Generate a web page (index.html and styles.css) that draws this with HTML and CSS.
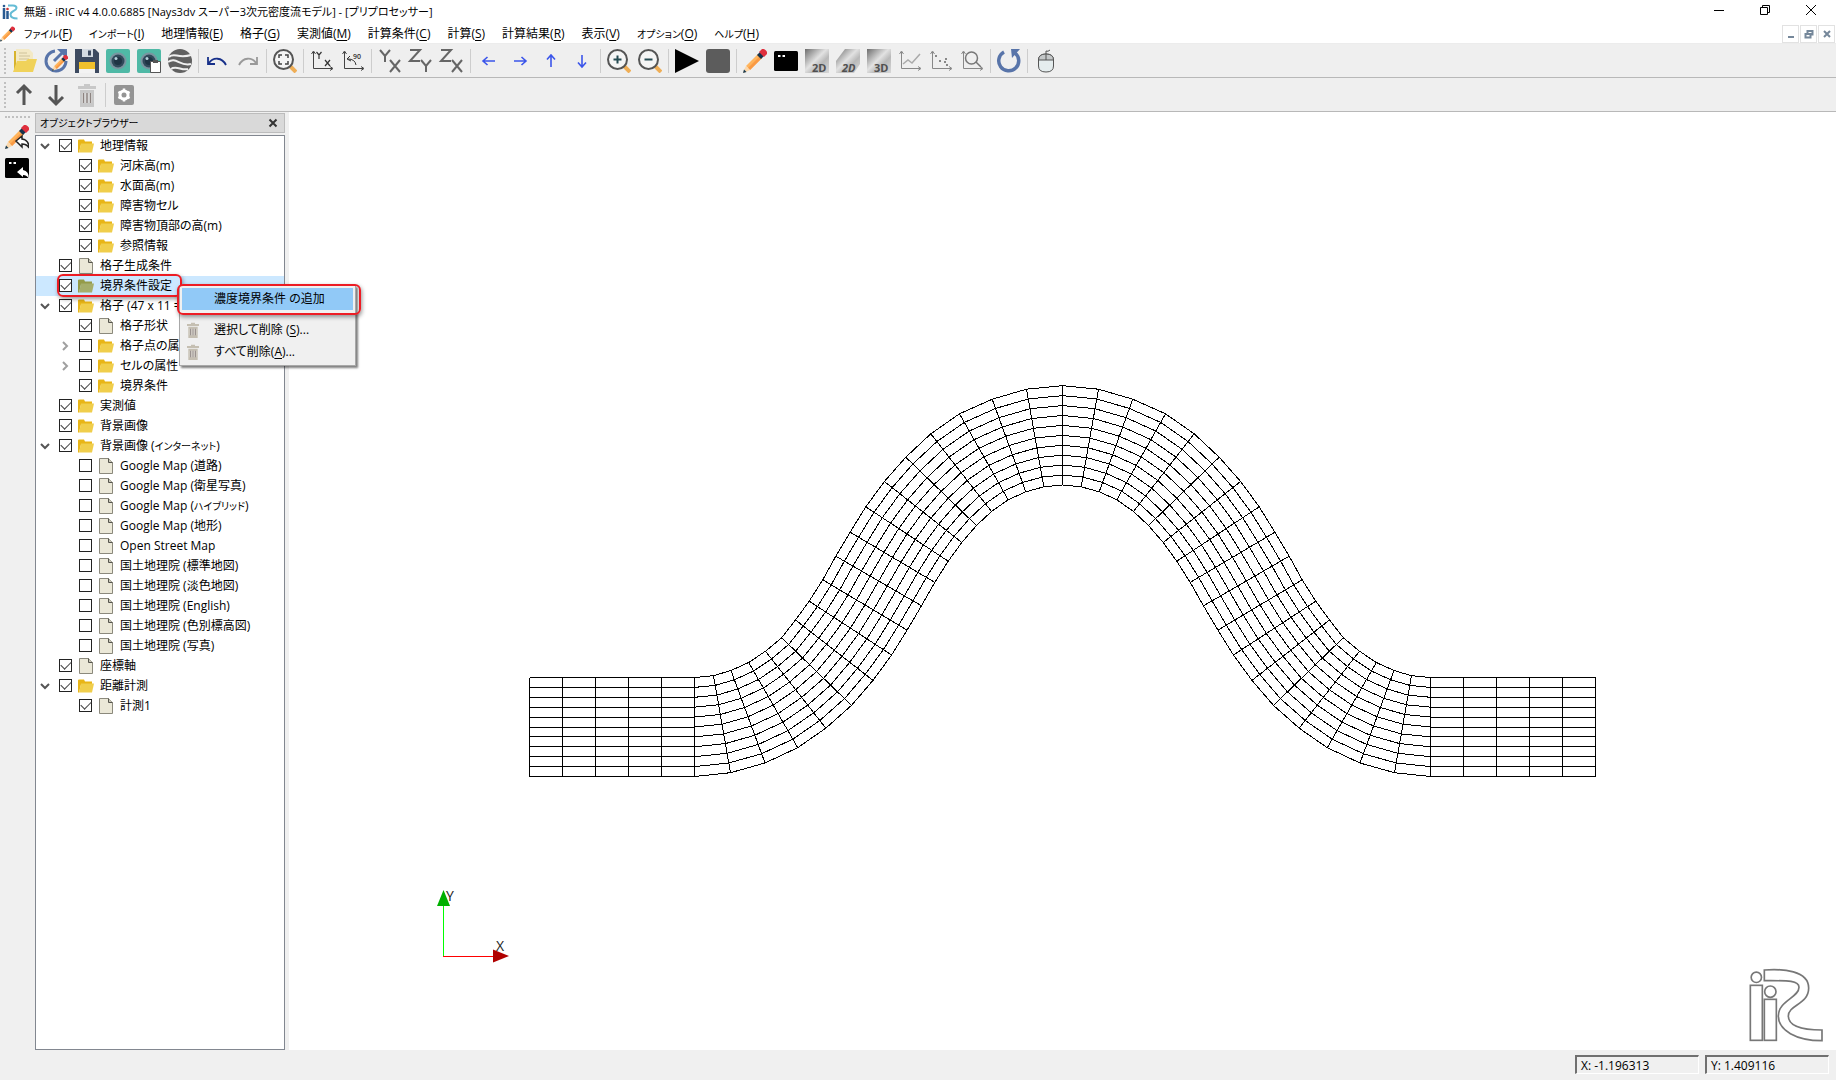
FILE: index.html
```html
<!DOCTYPE html>
<html lang="ja">
<head>
<meta charset="utf-8">
<title>無題 - iRIC v4</title>
<link rel="stylesheet" href="styles.css">
</head>
<body>
<svg class="sprite" aria-hidden="true">
  <defs>
    <linearGradient id="silver" x1="0" y1="0" x2="1" y2="1"><stop offset="0" stop-color="#6c6c6c"/><stop offset=".45" stop-color="#e2e2e2"/><stop offset=".65" stop-color="#b9b9b9"/><stop offset="1" stop-color="#d8d8d8"/></linearGradient>
    <symbol id="folder" viewBox="0 0 16 13"><path d="M0 1q0-1 1-1h5l1 2h7v3H3L1 13H0z" fill="#e8b517"/><path d="M3 4h13l-2 9H1z" fill="#f0ce4c"/></symbol>
    <symbol id="page" viewBox="0 0 14 16"><path d="M.5.5h9l4 4v11H.5z" fill="#ebe8d8" stroke="#8b897c"/><path d="M9.500.5v4h4" fill="#c9c7b8" stroke="#56554e"/></symbol>
    <symbol id="down" viewBox="0 0 10 6"><path d="M1 1l4 4 4-4" fill="none" stroke="#555" stroke-width="2"/></symbol>
    <symbol id="right" viewBox="0 0 6 10"><path d="M1 1l4 4-4 4" fill="none" stroke="#a0a0a0" stroke-width="2"/></symbol>
    <symbol id="trash" viewBox="0 0 24 24"><path d="M3 3h6V1h6v2h6v3H3zM5 7h14v17H5z" fill="currentColor"/><path d="M8.500 10v10M12 10v10M15.500 10v10" stroke="#fff" stroke-opacity=".55" stroke-width="3"/><path d="M8.500 10v10M12 10v10M15.500 10v10" stroke="#8c8380" stroke-width="1.500"/></symbol>
    <symbol id="pencil" viewBox="0 0 24 24"><path d="M3 17L15 5l4 4L7 21z" fill="#ffb45c"/><path d="M5 19L17 7l2 2L7 21z" fill="#f99a45"/><path d="M3 17l4 4-6 3-1-1z" fill="#fbd8ac"/><path d="M1 20.500L0 24l3.500-1z" fill="#173a52"/><path d="M14 6l3-3 4 4-3 3z" fill="#16334c"/><path d="M16 3l3-3q2-.5 4 1.500t1 3.500l-3 3z" fill="#df2f3d"/></symbol>
    <symbol id="console" viewBox="0 0 24 24"><rect y="2" width="24" height="20" rx="1.500" fill="#000"/><path d="M4 7h2.500M8.500 7H11" stroke="#fff" stroke-width="2"/></symbol>
    <symbol id="camera" viewBox="0 0 24 24"><rect width="24" height="24" rx="2" fill="#4fb9a6"/><circle cx="12" cy="12" r="8.500" fill="#7995a0"/><circle cx="12" cy="12" r="6.500" fill="#31495a"/><circle cx="12" cy="12" r="4" fill="#1f3444"/><circle cx="10" cy="9.500" r="1.500" fill="#b7d2dc"/></symbol>
    <symbol id="lens" viewBox="0 0 24 24"><path d="M17 17l6 6" stroke="#efae56" stroke-width="4"/><circle cx="10.500" cy="10.500" r="9.500" fill="#f5f5f5" stroke="#555" stroke-width="2"/></symbol>
    <symbol id="axes" viewBox="0 0 24 24"><path d="M3.500 3v16.500H22M1.500 5l2-3 2 3M20 17.500l3 2-3 2" fill="none" stroke="currentColor"/></symbol>
    <symbol id="arrow" viewBox="0 0 24 24"><path d="M18 12H6M10.500 8L6 12l4.500 4" fill="none" stroke="#3b55ea" stroke-width="1.600"/></symbol>
    <symbol id="logo" viewBox="0 0 240 240"><path d="M55 24C110 20 188 25 188 78c0 50-61 50-61 84 0 30 40 42 101 42v32C150 236 97 205 97 162c0-46 62-55 62-86 0-22-40-20-104-20z"/><rect x="13" y="70" width="36" height="165"/><rect x="55" y="112" width="36" height="123"/><circle cx="31" cy="46" r="15.500"/><circle cx="73" cy="89" r="17"/></symbol>
  </defs>
</svg>

<header class="titlebar">
  <svg class="app-logo" viewBox="0 0 16 16"><path d="M6 1.500h5q3.500 0 3.500 2.500c0 3-6 3-6 6.500q0 4 7 4" fill="none" stroke="#65bcd5" stroke-width="2"/><path d="M2 4v11M5.500 7v8" stroke="#285a91" stroke-width="2.500"/><circle cx="2" cy="2" r="1.300" fill="#285a91"/><circle cx="5.500" cy="5" r="1.300" fill="#c33"/></svg>
  <h1>無題 - iRIC v4 4.0.0.6885 [Nays3dv スーパー3次元密度流モデル] - [プリプロセッサー]</h1>
  <div class="window-buttons">
    <button aria-label="最小化"><svg viewBox="0 0 12 12"><path d="M1 6.500h10"/></svg></button>
    <button aria-label="元に戻す"><svg viewBox="0 0 12 12"><path d="M1.500 3.500h7v7h-7zM3.500 3.500v-2h7v7h-2"/></svg></button>
    <button aria-label="閉じる"><svg viewBox="0 0 12 12"><path d="M1 1l10 10M11 1L1 11"/></svg></button>
  </div>
</header>

<nav class="menubar">
  <svg class="menu-icon"><use href="#pencil"/></svg>
  <button><span class="kana">ファイル</span>(<u>F</u>)</button><button><span class="kana">インポート</span>(<u>I</u>)</button><button>地理情報(<u>E</u>)</button><button>格子(<u>G</u>)</button><button>実測値(<u>M</u>)</button><button>計算条件(<u>C</u>)</button><button>計算(<u>S</u>)</button><button>計算結果(<u>R</u>)</button><button>表示(<u>V</u>)</button><button><span class="kana">オプション</span>(<u>O</u>)</button><button><span class="kana">ヘルプ</span>(<u>H</u>)</button>
  <div class="child-buttons">
    <button aria-label="最小化"><svg viewBox="0 0 10 10"><path d="M2 8h6"/></svg></button>
    <button aria-label="元に戻す"><svg viewBox="0 0 10 10"><path d="M1.500 5h5v3.500h-5zM3.500 4V2h5v3.500h-2"/></svg></button>
    <button aria-label="閉じる"><svg viewBox="0 0 10 10"><path d="M2 2l6 6M8 2L2 8"/></svg></button>
  </div>
</nav>

<div class="toolbar" role="toolbar">
  <span class="grip"></span>
  <button aria-label="開く"><svg viewBox="0 0 24 24"><path d="M1 2h4v20H1z" fill="#d7b32d"/><path d="M3 0h13l4 4v14H3z" fill="#f3e9c5"/><path d="M6 4h8M6 7h11M6 10h10" stroke="#cfc39a"/><path d="M4 12h9l2-2h9l-4 13H0z" fill="#f0d25a"/></svg></button>
  <button aria-label="再読み込み"><svg viewBox="0 0 24 24"><path d="M11 2A10 10 0 1 0 22 12" fill="none" stroke="#5874a9" stroke-width="3"/><path d="M13 0h10v10z" fill="#5874a9"/><path d="M10 12l8-8" stroke="#5874a9" stroke-width="3"/><use href="#pencil" x="8" y="6" width="16" height="16"/></svg></button>
  <button aria-label="保存"><svg viewBox="0 0 24 24"><path d="M0 0h20l4 4v20H0z" fill="#3d4a60"/><path d="M7 0h11v8H7z" fill="#d5dbe2"/><path d="M13 1.500h3v5h-3z" fill="#3d4a60"/><path d="M4 13h16v7H4z" fill="#f0c02c"/><path d="M4 20h16v4H4z" fill="#f3f3f3"/></svg></button>
  <button aria-label="スナップショット"><svg><use href="#camera"/></svg></button>
  <button aria-label="スナップショットをコピー"><svg viewBox="0 0 24 24"><use href="#camera"/><path d="M13.500 12.500h10v11h-10z" fill="#fff" stroke="#555"/><path d="M16 11h5v3h-5z" fill="#555"/></svg></button>
  <button aria-label="Google Earth"><svg viewBox="0 0 24 24"><circle cx="12" cy="12" r="12" fill="#606060"/><path d="M1 8c5-5 9 2 22-2M0 13c8-6 12 5 23 2M3 20c5-4 11 2 17 0" fill="none" stroke="#efefef" stroke-width="2"/></svg></button>
  <span class="separator"></span>
  <button aria-label="元に戻す"><svg viewBox="0 0 24 24"><path d="M3 8v7h7M4 14c4-6 13-6 17 2" fill="none" stroke="#17308a" stroke-width="1.800"/></svg></button>
  <button aria-label="やり直し"><svg viewBox="0 0 24 24"><path d="M21 8v7h-7M20 14c-4-6-13-6-17 2" fill="none" stroke="#999" stroke-width="1.800"/></svg></button>
  <span class="separator"></span>
  <button aria-label="全体表示"><svg viewBox="0 0 24 24"><use href="#lens"/><path d="M6 9V6h3M12 6h3v3M15 12v3h-3M9 15H6v-3" fill="none" stroke="#444" stroke-width="1.500"/></svg></button>
  <span class="separator"></span>
  <button aria-label="XY方向"><svg viewBox="0 0 24 24"><use href="#axes"/><path d="M6.500 3l2.500 3 2.500-3M9 6v4M15 11l5 6M20 11l-5 6" fill="none" stroke="#333" stroke-width="1.200"/></svg></button>
  <button aria-label="90度回転"><svg viewBox="0 0 24 24"><use href="#axes"/><text x="12" y="10" class="label-90">90</text><path d="M15 16q-1-6-8-6M9 7l-3 3 4 2" fill="none" stroke="#333"/></svg></button>
  <span class="separator"></span>
  <button aria-label="XY平面"><svg viewBox="0 0 24 24" class="plane"><path d="M2 1l5 6 5-6M7 7v6M12 11l10 12M22 11L12 23"/></svg></button>
  <button aria-label="YZ平面"><svg viewBox="0 0 24 24" class="plane"><path d="M1 1h10L1 12h10M12 11l5 6 5-6M17 17v6"/></svg></button>
  <button aria-label="ZX平面"><svg viewBox="0 0 24 24" class="plane"><path d="M1 1h10L1 12h10M12 11l10 12M22 11L12 23"/></svg></button>
  <span class="separator"></span>
  <button aria-label="左へ"><svg><use href="#arrow"/></svg></button>
  <button aria-label="右へ"><svg class="turn-right"><use href="#arrow"/></svg></button>
  <button aria-label="上へ"><svg class="turn-up"><use href="#arrow"/></svg></button>
  <button aria-label="下へ"><svg class="turn-down"><use href="#arrow"/></svg></button>
  <span class="separator"></span>
  <button aria-label="拡大"><svg viewBox="0 0 24 24"><use href="#lens"/><path d="M6.500 10.500h8M10.500 6.500v8" stroke="#254b52" stroke-width="2"/></svg></button>
  <button aria-label="縮小"><svg viewBox="0 0 24 24"><use href="#lens"/><path d="M6.500 10.500h8" stroke="#254b52" stroke-width="2"/></svg></button>
  <span class="separator"></span>
  <button aria-label="実行"><svg viewBox="0 0 24 24"><path d="M0 0l24 12L0 24z"/></svg></button>
  <button aria-label="停止"><svg viewBox="0 0 24 24"><rect width="24" height="24" rx="3" fill="#5c5c5c"/></svg></button>
  <span class="separator"></span>
  <button aria-label="プリプロセッサー"><svg><use href="#pencil"/></svg></button>
  <button aria-label="コンソール"><svg><use href="#console"/></svg></button>
  <button aria-label="2D表示"><svg viewBox="0 0 24 24"><path d="M0 0h24v24H0z" fill="url(#silver)"/><text x="7" y="23" class="label-view">2D</text></svg></button>
  <button aria-label="鳥瞰図表示"><svg viewBox="0 0 24 24"><path d="M9 0h15v15l-6 9H0V12z" fill="url(#silver)"/><text x="6" y="23" class="label-view slanted">2D</text></svg></button>
  <button aria-label="3D表示"><svg viewBox="0 0 24 24"><path d="M0 0h24v24H0z" fill="url(#silver)"/><text x="7" y="23" class="label-view">3D</text></svg></button>
  <button aria-label="グラフ" class="muted"><svg viewBox="0 0 24 24"><use href="#axes"/><path d="M5 15l5-4 4 3 8-9" fill="none" stroke="#aaa" stroke-width="1.500"/></svg></button>
  <button aria-label="散布図" class="muted"><svg viewBox="0 0 24 24"><use href="#axes"/><path d="M6 7h2M10 12h2M15 13h2M16 10h2M17 16h2" stroke="#888" stroke-width="2"/></svg></button>
  <button aria-label="検証" class="muted"><svg viewBox="0 0 24 24"><use href="#axes"/><circle cx="11.500" cy="9" r="6" fill="none" stroke="#777" stroke-width="1.500"/><path d="M16 13l5 5" stroke="#777" stroke-width="1.500"/></svg></button>
  <span class="separator"></span>
  <button aria-label="更新"><svg viewBox="0 0 24 24"><path d="M7 3A10 10 0 1 0 18 4" fill="none" stroke="#5874a9" stroke-width="3.500"/><path d="M14 0h9l-8 9z" fill="#5874a9"/></svg></button>
  <span class="separator"></span>
  <button aria-label="マウス操作"><svg viewBox="0 0 24 24"><path d="M4.500 11q0-6 7.500-6t7.500 6v6q0 6-7.500 6t-7.500-6z" fill="#e5edee" stroke="#555"/><path d="M4.500 11q0-6 7.500-6t7.500 6z" fill="#c4c7c8" stroke="#555"/><path d="M12 11V2q2 1 4-1" fill="none" stroke="#555"/></svg></button>
</div>

<div class="toolbar" role="toolbar">
  <span class="grip"></span>
  <button aria-label="上へ移動"><svg viewBox="0 0 24 24"><path d="M11 22V4M4 10l7-7 7 7" fill="none" stroke="#555" stroke-width="3"/></svg></button>
  <button aria-label="下へ移動"><svg viewBox="0 0 24 24"><path d="M12 2v18M5 14l7 7 7-7" fill="none" stroke="#555" stroke-width="3"/></svg></button>
  <button aria-label="削除" class="trash"><svg><use href="#trash"/></svg></button>
  <span class="separator"></span>
  <button aria-label="プロパティ"><svg viewBox="0 0 24 24"><rect x="2" y="2" width="20" height="20" rx="2" fill="#949494"/><circle cx="12" cy="12" r="4" fill="none" stroke="#fff" stroke-width="3"/><path d="M12 5.500v13M6.400 8.800l11.200 6.400M17.600 8.800L6.400 15.200" stroke="#fff" stroke-width="2.500"/><circle cx="12" cy="12" r="2.500" fill="#949494"/></svg></button>
</div>

<div class="workspace">
  <aside class="side-tools">
    <span class="grip-row"></span>
    <button aria-label="プリプロセッサーへ"><svg viewBox="0 0 24 24"><use href="#pencil"/><path d="M11 16l6-5v3q7 1 7 9-2-4-7-4v3z" fill="#fff" stroke="#222" stroke-width="1.500"/></svg></button>
    <button aria-label="コンソールへ"><svg viewBox="0 0 24 24"><use href="#console"/><path d="M12 16l6-5v3q6 1 6 9-2-4-6-4v2z" fill="#fff"/></svg></button>
  </aside>

  <aside class="dock">
    <div class="dock-title"><h2 class="kana">オブジェクトブラウザー</h2><button aria-label="閉じる"><svg viewBox="0 0 10 10"><path d="M1.500 1.500l7 7M8.500 1.500l-7 7"/></svg></button></div>
    <ul class="tree">
      <li><svg class="twist"><use href="#down"/></svg><label><input type="checkbox" checked><svg class="icon"><use href="#folder"/></svg>地理情報</label></li>
      <li class="child"><label><input type="checkbox" checked><svg class="icon"><use href="#folder"/></svg>河床高(m)</label></li>
      <li class="child"><label><input type="checkbox" checked><svg class="icon"><use href="#folder"/></svg>水面高(m)</label></li>
      <li class="child"><label><input type="checkbox" checked><svg class="icon"><use href="#folder"/></svg>障害物セル</label></li>
      <li class="child"><label><input type="checkbox" checked><svg class="icon"><use href="#folder"/></svg>障害物頂部の高(m)</label></li>
      <li class="child"><label><input type="checkbox" checked><svg class="icon"><use href="#folder"/></svg>参照情報</label></li>
      <li><label><input type="checkbox" checked><svg class="icon"><use href="#page"/></svg>格子生成条件</label></li>
      <li class="selected"><label><input type="checkbox" checked><svg class="icon"><use href="#folder"/></svg>境界条件設定</label>
        <span class="mark mark-row"></span>
        <div class="context-menu" role="menu">
          <button class="active" role="menuitem">濃度境界条件 の追加</button>
          <hr>
          <button role="menuitem"><svg><use href="#trash"/></svg>選択して削除 (<u>S</u>)...</button>
          <button role="menuitem"><svg><use href="#trash"/></svg>すべて削除(<u>A</u>)...</button>
          <span class="mark mark-menu"></span>
        </div>
      </li>
      <li><svg class="twist"><use href="#down"/></svg><label><input type="checkbox" checked><svg class="icon"><use href="#folder"/></svg>格子 (47 x 11 = 517)</label></li>
      <li class="child"><label><input type="checkbox" checked><svg class="icon"><use href="#page"/></svg>格子形状</label></li>
      <li class="child"><svg class="twist"><use href="#right"/></svg><label><input type="checkbox"><svg class="icon"><use href="#folder"/></svg>格子点の属性</label></li>
      <li class="child"><svg class="twist"><use href="#right"/></svg><label><input type="checkbox"><svg class="icon"><use href="#folder"/></svg>セルの属性</label></li>
      <li class="child"><label><input type="checkbox" checked><svg class="icon"><use href="#folder"/></svg>境界条件</label></li>
      <li><label><input type="checkbox" checked><svg class="icon"><use href="#folder"/></svg>実測値</label></li>
      <li><label><input type="checkbox" checked><svg class="icon"><use href="#folder"/></svg>背景画像</label></li>
      <li><svg class="twist"><use href="#down"/></svg><label><input type="checkbox" checked><svg class="icon"><use href="#folder"/></svg><span>背景画像 (<span class="kana">インターネット</span>)</span></label></li>
      <li class="child"><label><input type="checkbox"><svg class="icon"><use href="#page"/></svg>Google Map (道路)</label></li>
      <li class="child"><label><input type="checkbox"><svg class="icon"><use href="#page"/></svg>Google Map (衛星写真)</label></li>
      <li class="child"><label><input type="checkbox"><svg class="icon"><use href="#page"/></svg><span>Google Map (<span class="kana">ハイブリッド</span>)</span></label></li>
      <li class="child"><label><input type="checkbox"><svg class="icon"><use href="#page"/></svg>Google Map (地形)</label></li>
      <li class="child"><label><input type="checkbox"><svg class="icon"><use href="#page"/></svg>Open Street Map</label></li>
      <li class="child"><label><input type="checkbox"><svg class="icon"><use href="#page"/></svg>国土地理院 (標準地図)</label></li>
      <li class="child"><label><input type="checkbox"><svg class="icon"><use href="#page"/></svg>国土地理院 (淡色地図)</label></li>
      <li class="child"><label><input type="checkbox"><svg class="icon"><use href="#page"/></svg>国土地理院 (English)</label></li>
      <li class="child"><label><input type="checkbox"><svg class="icon"><use href="#page"/></svg>国土地理院 (色別標高図)</label></li>
      <li class="child"><label><input type="checkbox"><svg class="icon"><use href="#page"/></svg>国土地理院 (写真)</label></li>
      <li><label><input type="checkbox" checked><svg class="icon"><use href="#page"/></svg>座標軸</label></li>
      <li><svg class="twist"><use href="#down"/></svg><label><input type="checkbox" checked><svg class="icon"><use href="#folder"/></svg>距離計測</label></li>
      <li class="child"><label><input type="checkbox" checked><svg class="icon"><use href="#page"/></svg>計測1</label></li>
    </ul>
  </aside>

  <main class="view">
    <svg class="scene" viewBox="289 112 1547 938">
      <path id="mesh" class="mesh"/>
      <path d="M443.500 906v50" stroke="#0f0" shape-rendering="crispEdges"/>
      <path d="M443 956.500h50" stroke="#f00" shape-rendering="crispEdges"/>
      <path d="M437 906l6.500-16 6.500 16z" fill="#00b000"/>
      <path d="M493 949.500v13l16-6.500z" fill="#b00000"/>
      <text x="446" y="901" class="axis-label">Y</text>
      <text x="496" y="951" class="axis-label">X</text>
      <use href="#logo" x="1746" y="962" width="80" height="80" class="watermark"/>
    </svg>
  </main>
</div>

<footer class="statusbar"><output>X: -1.196313</output><output>Y: 1.409116</output></footer>
<script src="mesh.js"></script>
</body>
</html>
```

FILE: styles.css
```css
* { box-sizing: border-box; }
body {
  margin: 0;
  height: 100vh;
  display: flex;
  flex-direction: column;
  overflow: hidden;
  background: #f0f0f0;
  color: #000;
  font: 12px/20px "Open Sans", "Noto Sans CJK JP", sans-serif;
  font-feature-settings: "palt";
}
h1, h2 { margin: 0; font-size: 11px; font-weight: 400; white-space: nowrap; }
.kana { font-size: 10px; }
button { padding: 0; border: 0; background: none; color: inherit; font: inherit; font-feature-settings: inherit; }
svg { display: block; flex: none; }
.sprite { position: absolute; width: 0; height: 0; }

.titlebar { display: flex; align-items: center; height: 24px; padding: 0 2px; background: #fff; }
.app-logo { width: 16px; height: 16px; margin-right: 6px; }
.window-buttons { display: flex; margin-left: auto; }
.window-buttons button { width: 46px; height: 22px; display: grid; place-items: center; }
.window-buttons svg { width: 12px; height: 12px; margin-bottom: 4px; fill: none; stroke: #000; }

.menubar { display: flex; align-items: center; height: 20px; background: #fff; border-bottom: 1px solid #ececec; }
.menubar > button { padding: 0 8px 0 9px; white-space: nowrap; }
.menu-icon { width: 15px; height: 16px; }
.menubar u, .context-menu u { text-underline-offset: 2px; }
.child-buttons { display: flex; gap: 1px; margin-left: auto; padding-right: 1px; }
.child-buttons button { width: 17px; height: 18px; display: grid; place-items: center; border: 1px solid #e2e2e2; }
.child-buttons svg { width: 10px; height: 10px; fill: none; stroke: #75879a; stroke-width: 2; }

.toolbar { display: flex; align-items: center; height: 34px; padding-left: 4px; background: #efefef; border-bottom: 1px solid #b8b8b8; }
.toolbar button { width: 31px; padding: 0 4px 0 3px; color: #444; }
.toolbar svg { width: 24px; height: 24px; overflow: visible; }
.toolbar .muted { color: #888; }
.toolbar .trash { color: #c8c8c8; }
.grip { width: 2px; height: 26px; margin-right: 4px; border-left: 2px dotted #c0c0c0; }
.separator { width: 1px; height: 24px; margin: 0 3px 0 2px; background: #cdcdcd; }
.plane { fill: none; stroke: #666; stroke-width: 2; }
.turn-right { transform: rotate(180deg); }
.turn-up { transform: rotate(90deg); }
.turn-down { transform: rotate(-90deg); }
.label-90 { font: 600 7px "Open Sans", sans-serif; fill: #333; }
.label-view { font: 700 11px "Open Sans", sans-serif; fill: #505050; }
.slanted { font-style: italic; }

.workspace { flex: 1; min-height: 0; display: flex; }
.side-tools { width: 35px; padding: 4px 5px; display: flex; flex-direction: column; gap: 7px; }
.side-tools svg { width: 24px; height: 24px; }
.grip-row { height: 2px; border-top: 2px dotted #c0c0c0; }
.dock { width: 250px; margin-right: 4px; padding-top: 1px; display: flex; flex-direction: column; gap: 2px; }
.dock-title { height: 20px; display: flex; align-items: center; justify-content: space-between; padding: 0 6px 0 4px; background: #d9d9d9; border: 1px solid #bcbcbc; }
.dock-title svg { width: 10px; height: 10px; stroke: #333; stroke-width: 2; }

.tree { flex: 1; margin: 0; padding: 0; list-style: none; background: #fff; border: 1px solid #828790; }
.tree li { position: relative; height: 20px; padding-left: 23px; display: flex; align-items: center; }
.tree li.child { padding-left: 43px; }
.tree label { display: flex; align-items: center; gap: 6px; white-space: nowrap; }
.tree .icon { width: 16px; height: 16px; }
.twist { position: absolute; left: 4px; width: 10px; height: 8px; }
.child .twist { left: 24px; height: 10px; }
.tree input { appearance: none; position: relative; width: 13px; height: 13px; margin: 0 0 1px; background: #fff; border: 1px solid #222; }
.tree input:checked::after { content: ""; position: absolute; left: 1px; top: 1px; width: 9px; height: 5px; border: solid #444; border-width: 0 0 1px 1px; transform: rotate(-45deg); }
.tree .selected { background: #cce8ff; z-index: 1; }
.selected .icon { filter: hue-rotate(18deg) brightness(.82) saturate(.55); }

.mark { position: absolute; border: 2px solid #ed1c24; border-radius: 6px; box-shadow: 1px 2px 4px rgba(0, 0, 0, .4); pointer-events: none; }
.mark-row { left: 21px; top: -2px; width: 125px; height: 23px; }
.mark-menu { left: -3px; top: -2px; width: 184px; height: 31px; }
.context-menu { position: absolute; left: 143px; top: 9px; width: 177px; padding: 2px; background: #f0f0f0; border: 1px solid #a8a8a8; box-shadow: 2px 2px 2px rgba(0, 0, 0, .5); }
.context-menu button { display: flex; align-items: center; width: 100%; height: 22px; padding-left: 32px; white-space: nowrap; }
.context-menu .active { background: #91c9f7; }
.context-menu svg { width: 16px; height: 16px; margin: 0 13px 0 -29px; color: #c5bfb2; }
.context-menu hr { margin: 4px 0; border: 0; border-top: 1px solid #dadada; }

.view { flex: 1; min-width: 0; background: #fff; }
.scene { width: 100%; height: 100%; }
.mesh { fill: none; stroke: #000; stroke-width: 1; shape-rendering: crispEdges; }
.axis-label { font: 14px "Open Sans", sans-serif; fill: #222; }
.watermark { fill: #fff; stroke: #777; stroke-width: 5; }

.statusbar { height: 30px; display: flex; justify-content: flex-end; align-items: center; gap: 6px; padding: 0 7px 1px 0; }
.statusbar output { width: 124px; height: 19px; padding-left: 4px; line-height: 18px; border: 1px solid #fff; border-top: 2px solid #707070; border-left: 2px solid #707070; }
```

FILE: mesh.js
```js
// Cross sections of the channel up to its crest: [left bank x, y, right bank x, y].
const half = [
  [529.5, 677.5, 529.5, 776.5], [562.5, 677.5, 562.5, 776.5], [595.5, 677.5, 595.5, 776.5],
  [628.5, 677.5, 628.5, 776.5], [661.5, 677.5, 661.5, 776.5], [694.5, 677.5, 694.5, 776.5],
  [713.5, 675.7, 730.5, 772.7], [731, 670.5, 765, 763], [748.7, 662.5, 797.7, 747.7],
  [765.5, 651.2, 825.8, 728.2], [781.7, 637.7, 851.5, 705.4], [795.5, 620, 873, 680.4],
  [809.2, 601.2, 891.6, 655], [822.8, 579.8, 907.1, 630.1], [835.8, 556.2, 921.5, 605.8],
  [850.1, 532.2, 934.8, 582.4], [865.8, 506.8, 948.2, 561.2], [884.4, 481.5, 961.8, 542.5],
  [905.8, 457.2, 976.5, 525.5], [930.8, 433.8, 991.5, 511.5], [959.5, 413.8, 1008.2, 499.8],
  [992.2, 399.2, 1025.8, 491.8], [1026.5, 389.2, 1043.8, 486.8], [1062.5, 385.7, 1062.5, 485]
];
const axis = 1062.5;
const mirror = ([ax, ay, bx, by]) => [2 * axis - ax, ay, 2 * axis - bx, by];
const sections = half.concat(half.slice(0, -1).reverse().map(mirror));

const cells = 10;
let d = "";
for (const [ax, ay, bx, by] of sections) d += `M${ax} ${ay}L${bx} ${by}`;
for (let j = 0; j <= cells; j++) {
  const t = j / cells;
  sections.forEach(([ax, ay, bx, by], i) => {
    d += `${i ? "L" : "M"}${ax + (bx - ax) * t} ${ay + (by - ay) * t}`;
  });
}
document.getElementById("mesh").setAttribute("d", d);
```
